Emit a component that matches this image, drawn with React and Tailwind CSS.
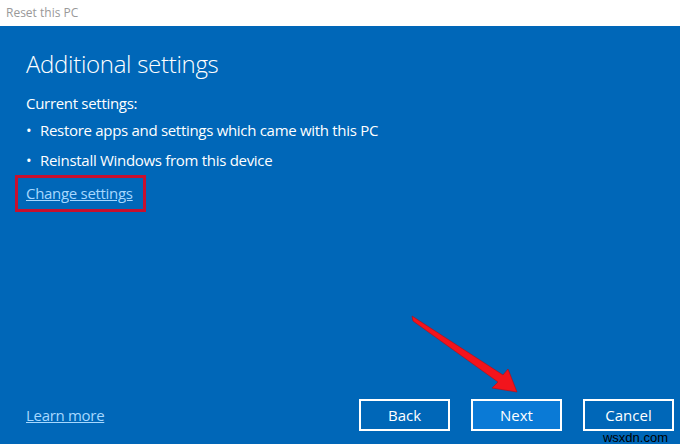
export default function App() {
  const font = { fontFamily: '"Segoe UI", "Open Sans", "Noto Sans", sans-serif' }

  return (
    <div className="relative w-[680px] h-[444px] overflow-hidden flex flex-col bg-[#0067b8]" style={font}>
      {/* title bar */}
      <div className="h-[26px] bg-white flex items-center px-[6px] shrink-0">
        <span className="text-[12px] text-[#999999]">Reset this PC</span>
      </div>

      <div className="flex-1 flex flex-col text-white">
        <div className="px-[26px] pt-[22px]">
          <h1 className="text-[24px] font-light leading-[32px] tracking-[-0.3px]">Additional settings</h1>
          <p className="mt-[13px] text-[15px] leading-[20px] tracking-[-0.3px]">Current settings:</p>
          <ul className="mt-[7px] space-y-[10px] text-[15px] leading-[20px] tracking-[-0.3px]">
            <li className="flex">
              <span className="w-[14px]">•</span>
              <span>Restore apps and settings which came with this PC</span>
            </li>
            <li className="flex">
              <span className="w-[14px]">•</span>
              <span>Reinstall Windows from this device</span>
            </li>
          </ul>
        </div>

        <div className="ml-[15px] mt-[5px] w-[131px] h-[37px] border-[3px] border-[#c8102e] flex items-center pl-[8px]">
          <a className="text-[15px] underline text-[#a6d8ff] whitespace-nowrap tracking-[-0.3px]">Change settings</a>
        </div>

        <div className="mt-auto mb-[13px] flex items-center justify-between pl-[26px] pr-[6px]">
          <a className="text-[15px] underline text-[#a6d8ff] tracking-[-0.3px]">Learn more</a>
          <div className="flex gap-[21px] text-[15px]">
            <button className="w-[91px] h-[32px] border-2 border-white">Back</button>
            <button className="w-[91px] h-[32px] border-2 border-white bg-[#0a7ad6]">Next</button>
            <button className="w-[91px] h-[32px] border-2 border-white">Cancel</button>
          </div>
        </div>
      </div>

      {/* red arrow annotation */}
      <svg className="absolute left-0 top-0" width="680" height="444" viewBox="0 0 680 444">
        <polygon
          points="412,316 503,375 508,369 517,392 492,388 498,382 413,321"
          fill="#f2141c"
          stroke="#b80a10"
          strokeWidth="0.6"
          strokeLinejoin="round"
        />
      </svg>

      <span className="absolute right-[12px] bottom-[-3px] text-[13px] text-black" style={{ fontFamily: '"Liberation Sans", sans-serif' }}>
        wsxdn.com
      </span>
    </div>
  )
}
